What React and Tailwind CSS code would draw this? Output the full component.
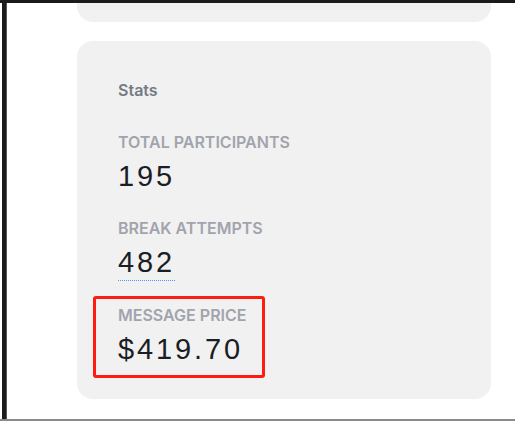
const stats = [
  { label: "TOTAL PARTICIPANTS", value: "195" },
  { label: "BREAK ATTEMPTS", value: "482", hint: true },
  { label: "MESSAGE PRICE", value: "$419.70", marked: true },
]

function Stat({ label, value, hint, marked }) {
  return (
    <div className="relative">
      {marked && (
        <span className="absolute left-[-25px] top-[-9px] w-[172px] h-[82px] rounded-[3px] border-[3px] border-[#ff1a12]" />
      )}
      <div className="text-[16px] leading-5 font-semibold text-[#a1a4ad]">{label}</div>
      <div className="mt-[6px] text-[29px] leading-[36px] tracking-[0.1em] text-[#1a1d24]" style={{ fontFamily: '"Liberation Sans", Arial, sans-serif' }}>
        {hint ? (
          <span className="inline-block border-b border-dotted border-[#4a9dff] leading-[34px] pb-[1px]" title="Total break attempts">
            {value}
          </span>
        ) : (
          value
        )}
      </div>
    </div>
  )
}

export default function App() {
  return (
    <div className="w-[515px] h-[421px] flex flex-col bg-white overflow-hidden" style={{ fontFamily: "Inter, 'Noto Sans', sans-serif" }}>
      <div className="h-[3px] bg-[#1b1b1b] shrink-0" />
      <div className="flex flex-1 min-h-0">
        <div className="w-[2px] bg-white" />
        <div className="w-[5px] bg-[#1b1b1b] border-r border-[#555]" />
        <main className="flex-1 pl-[70px]">
          <div className="w-[414px] h-[19px] rounded-b-2xl bg-[#f1f1f1]" />
          <section className="mt-[19px] w-[414px] h-[358px] rounded-2xl bg-[#f1f1f1] pl-[41px] pt-[39px]">
            <h3 className="text-[16px] leading-5 font-semibold text-[#767a85]">Stats</h3>
            <div className="mt-[32px] flex flex-col gap-[24px]">
              {stats.map((s) => (
                <Stat key={s.label} {...s} />
              ))}
            </div>
          </section>
        </main>
      </div>
      <div className="h-[2px] bg-[#8a8a8a] shrink-0" />
    </div>
  )
}
